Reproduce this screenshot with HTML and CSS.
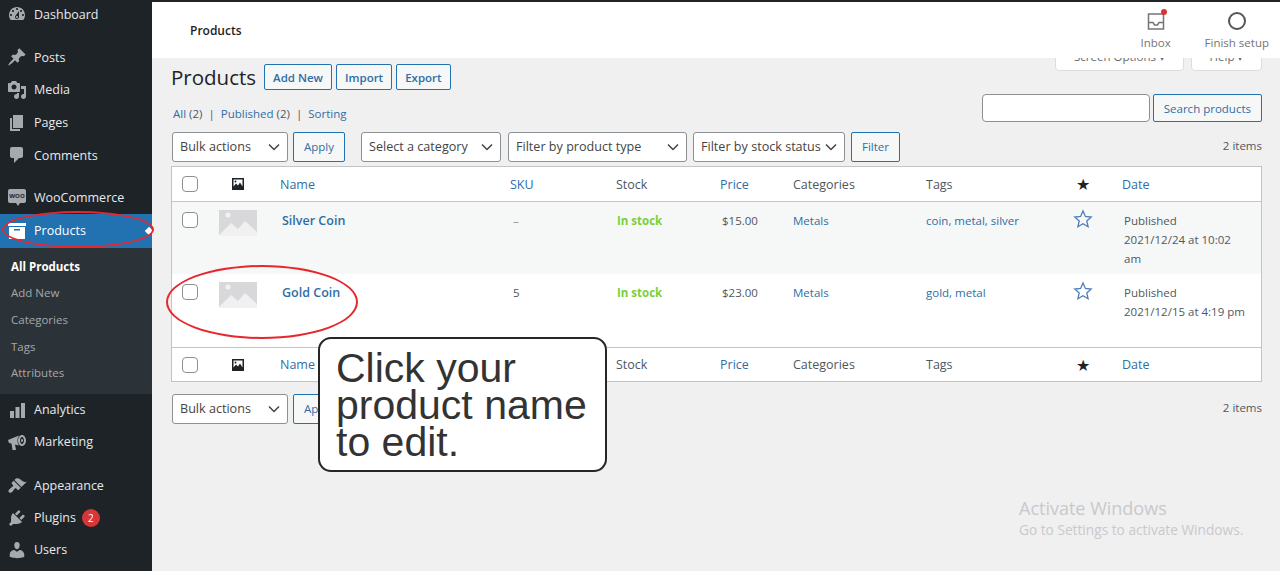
FILE: index.html
```html
<!DOCTYPE html>
<html>
<head>
    <meta charset="utf-8">
    <title>Products</title>
    <link rel="stylesheet" href="styles.css">
</head>
<body>
    <div class="page">
        <div class="sidebar">
            <a class="menu-item first"><svg viewBox="0 0 20 20"><path d="M3.76 16h12.48c1.1-1.37 1.76-3.11 1.76-5 0-4.42-3.58-8-8-8s-8 3.58-8 8c0 1.89.66 3.63 1.76 5zM10 4c.55 0 1 .45 1 1s-.45 1-1 1-1-.45-1-1 .45-1 1-1zM6 6c.55 0 1 .45 1 1s-.45 1-1 1-1-.45-1-1 .45-1 1-1zm8 0c.55 0 1 .45 1 1s-.45 1-1 1-1-.45-1-1 .45-1 1-1zm-5.37 5.55L12 7v6c0 1.1-.9 2-2 2s-2-.9-2-2c0-.57.24-1.08.63-1.45zM4 10c.55 0 1 .45 1 1s-.45 1-1 1-1-.45-1-1 .45-1 1-1zm12 0c.55 0 1 .45 1 1s-.45 1-1 1-1-.45-1-1 .45-1 1-1zm-5 3c0-.55-.45-1-1-1s-1 .45-1 1 .45 1 1 1 1-.45 1-1z"/></svg>Dashboard</a>
            <div class="menu-sep"></div>
            <a class="menu-item"><svg viewBox="0 0 20 20"><path d="M10.44 3.02l1.82-1.82 6.36 6.35-1.83 1.82c-1.05-.68-2.48-.57-3.41.36l-.75.75c-.92.93-1.04 2.35-.35 3.41l-1.83 1.82-2.41-2.41-2.8 2.79c-.42.42-3.38 2.71-3.8 2.29s1.86-3.39 2.28-3.81l2.79-2.79L4.1 9.36l1.83-1.82c1.05.69 2.48.57 3.4-.36l.75-.75c.93-.92 1.05-2.35.36-3.41z"/></svg>Posts</a>
            <a class="menu-item"><svg viewBox="0 0 20 20"><path d="M13 11V4c0-.55-.45-1-1-1h-1.67L9 1H5L3.67 3H2c-.55 0-1 .45-1 1v7c0 .55.45 1 1 1h10c.55 0 1-.45 1-1zM7 4.5c1.38 0 2.5 1.12 2.5 2.5S8.38 9.5 7 9.5 4.5 8.38 4.5 7 5.62 4.5 7 4.5zM14 6h5v10.5c0 1.38-1.12 2.5-2.5 2.5S14 17.88 14 16.5s1.12-2.5 2.5-2.5c.17 0 .34.02.5.05V9h-3V6zm-4 8.05V13h2v3.5c0 1.38-1.12 2.5-2.5 2.5S7 17.88 7 16.5 8.12 14 9.5 14c.17 0 .34.02.5.05z"/></svg>Media</a>
            <a class="menu-item"><svg viewBox="0 0 20 20"><path d="M6 15V2h10v13H6zm-1 1h8v2H3V5h2v11z"/></svg>Pages</a>
            <a class="menu-item"><svg viewBox="0 0 20 20"><path d="M5 2h9c1.1 0 2 .9 2 2v7c0 1.1-.9 2-2 2h-2l-5 5v-5H5c-1.1 0-2-.9-2-2V4c0-1.1.9-2 2-2z"/></svg>Comments</a>
            <div class="menu-sep short"></div>
            <a class="menu-item"><span class="woo-icon">WOO</span>WooCommerce</a>
            <a class="menu-item current"><svg viewBox="0 0 20 20"><path d="M19 5H1V2h18zM2 6h16v12H2zm5 2v1.500h6V8z" fill-rule="evenodd"/></svg>Products<span class="menu-arrow"></span></a>
            <div class="submenu">
                <a class="strong">All Products</a>
                <a>Add New</a>
                <a>Categories</a>
                <a>Tags</a>
                <a>Attributes</a>
            </div>
            <a class="menu-item tight"><svg viewBox="0 0 20 20"><path d="M3 11h4v7H3zM8.500 7h4v11h-4zM14 3h4v15h-4z"/></svg>Analytics</a>
            <a class="menu-item tight"><svg viewBox="0 0 20 20"><path d="M1 8l11-4.500c-1 1.500-1.500 3-1.500 5s.5 3.500 1.500 5L8 12.500 9 18H5.500L4.500 11.500 2 11zM15 3c2.200 0 4 2.500 4 5.500S17.200 14 15 14s-4-2.500-4-5.500S12.800 3 15 3zm0 2c-1.100 0-2 1.600-2 3.500s.9 3.500 2 3.500 2-1.600 2-3.500S16.100 5 15 5zm0 2c.6 0 1 .7 1 1.500s-.4 1.500-1 1.500-1-.7-1-1.500.4-1.500 1-1.500z" fill-rule="evenodd"/></svg>Marketing</a>
            <div class="menu-sep long"></div>
            <a class="menu-item tight"><svg viewBox="0 0 20 20"><path d="M14.480 11.060L7.410 3.990l1.500-1.500c.5-.56 2.300-.47 3.510.32 1.210.8 1.430 1.280 2.910 2.100 1.180.64 2.450 1.260 4.450.85zm-.71.71L6.700 4.700 4.930 6.470c-.39.39-.39 1.020 0 1.410l1.060 1.060c.39.39.39 1.030 0 1.420-.6.6-1.430 1.110-2.210 1.690-.35.26-.7.53-1.010.84C1.430 13.710.96 15.180 2 16.200c1.030 1.040 2.500.57 3.330-.36.31-.31.58-.66.84-1.010.58-.78 1.090-1.610 1.690-2.210.39-.39 1.030-.39 1.420 0l1.060 1.060c.39.39 1.020.39 1.410 0z"/></svg>Appearance</a>
            <a class="menu-item tight"><svg viewBox="0 0 20 20"><path d="M13.110 4.360L9.870 7.600 8 5.730l3.240-3.240c.35-.34 1.050-.2 1.560.32.52.51.66 1.210.31 1.550zm-8 1.770l.91-1.120 9.010 9.010-1.190.84c-.71.71-2.630 1.160-3.820 1.160H6.140L4.900 17.260c-.59.59-1.540.59-2.120 0-.59-.58-.59-1.530 0-2.120l1.240-1.240v-3.880c0-1.130.4-3.190 1.090-3.890zm7.260 3.970l3.240-3.240c.34-.35 1.040-.21 1.550.31.52.51.66 1.210.32 1.550l-3.240 3.250z"/></svg>Plugins<span class="badge">2</span></a>
            <a class="menu-item tight"><svg viewBox="0 0 20 20"><path d="M10 9.250c-2.270 0-2.730-3.440-2.730-3.440C7 4.020 7.820 2 9.970 2c2.160 0 2.980 2.020 2.710 3.810 0 0-.41 3.440-2.680 3.440zm0 2.570L12.720 10c2.390 0 4.520 2.330 4.520 4.530v2.490s-3.650 1.130-7.240 1.130c-3.650 0-7.240-1.130-7.240-1.130v-2.490c0-2.250 1.940-4.480 4.470-4.480z"/></svg>Users</a>
        </div>

        <div class="main">
            <div class="topbar">
                <div class="topbar-title">Products</div>
                <div class="top-action inbox">
                    <svg viewBox="0 0 20 20"><path d="M2.500 3h15v15h-15zM2.500 11.500h4.500l1.500 2.500h3l1.500-2.500h4.500" fill="none" stroke="#757575" stroke-width="1.500"/></svg>
                    <span class="inbox-dot"></span>
                    Inbox
                </div>
                <div class="top-action">
                    <svg viewBox="0 0 20 20"><circle cx="10" cy="10" r="8" fill="none" stroke="#555" stroke-width="2"/></svg>
                    Finish setup
                </div>
            </div>

            <div class="screen-tabs">
                <div class="screen-tab wide">Screen Options ▾</div>
                <div class="screen-tab">Help ▾</div>
            </div>

            <div class="content">
                <div class="title-row">
                    <h1>Products</h1>
                    <a class="btn">Add New</a>
                    <a class="btn">Import</a>
                    <a class="btn">Export</a>
                </div>

                <div class="views-row">
                    <div class="views"><a>All</a> (2)<span class="sep">|</span><a>Published</a> (2)<span class="sep">|</span><a>Sorting</a></div>
                    <div class="search">
                        <input type="text" class="search-input">
                        <a class="btn tall">Search products</a>
                    </div>
                </div>

                <div class="tablenav">
                    <select class="sel w-bulk"><option>Bulk actions</option></select>
                    <a class="btn tall apply">Apply</a>
                    <select class="sel w-cat"><option>Select a category</option></select>
                    <select class="sel w-type"><option>Filter by product type</option></select>
                    <select class="sel w-stock"><option>Filter by stock status</option></select>
                    <a class="btn tall filter">Filter</a>
                    <span class="count">2 items</span>
                </div>

                <table class="products">
                    <colgroup>
                        <col class="c-cb"><col class="c-thumb"><col class="c-name"><col class="c-sku"><col class="c-stock"><col class="c-price"><col class="c-cat"><col class="c-tags"><col class="c-star"><col>
                    </colgroup>
                    <thead>
                        <tr>
                            <th><span class="cb"></span></th>
                            <th><svg class="img-icon" viewBox="0 0 12 12"><path d="M0 0h12v12H0zM1.500 1.500v7l2.500-3 2 2 2-3 2.500 4v-7zM3.500 2.500a1 1 0 1 1 0 2 1 1 0 0 1 0-2z" fill-rule="evenodd"/></svg></th>
                            <th><a>Name</a></th>
                            <th><a>SKU</a></th>
                            <th>Stock</th>
                            <th><a>Price</a></th>
                            <th>Categories</th>
                            <th>Tags</th>
                            <th class="star-head">★</th>
                            <th><a>Date</a></th>
                        </tr>
                    </thead>
                    <tbody>
                        <tr class="alt">
                            <td><span class="cb"></span></td>
                            <td><svg class="thumb" viewBox="0 0 38 26"><rect width="38" height="26" fill="#d8d8da"/><circle cx="9" cy="5" r="2.500" fill="#f2f2f3"/><path d="M0 25l12-12 7 6 7-8 12 11v6H0z" fill="#f0f0f1"/></svg></td>
                            <td><a class="pname">Silver Coin</a></td>
                            <td class="sku muted">–</td>
                            <td class="instock">In stock</td>
                            <td class="price">$15.00</td>
                            <td><a>Metals</a></td>
                            <td><a>coin, metal, silver</a></td>
                            <td><svg class="star" viewBox="0 0 20 20"><path d="M10 2l2.400 5.500 5.800.6-4.400 3.900 1.300 5.800L10 14.800l-5.100 3 1.300-5.800L1.800 8.100l5.800-.6z"/></svg></td>
                            <td class="date">Published<br>2021/12/24 at 10:02 am</td>
                        </tr>
                        <tr class="second">
                            <td><span class="cb"></span></td>
                            <td><svg class="thumb" viewBox="0 0 38 26"><rect width="38" height="26" fill="#d8d8da"/><circle cx="9" cy="5" r="2.500" fill="#f2f2f3"/><path d="M0 25l12-12 7 6 7-8 12 11v6H0z" fill="#f0f0f1"/></svg></td>
                            <td><a class="pname">Gold Coin</a></td>
                            <td class="sku">5</td>
                            <td class="instock">In stock</td>
                            <td class="price">$23.00</td>
                            <td><a>Metals</a></td>
                            <td><a>gold, metal</a></td>
                            <td><svg class="star" viewBox="0 0 20 20"><path d="M10 2l2.400 5.500 5.800.6-4.400 3.900 1.300 5.800L10 14.800l-5.100 3 1.300-5.800L1.800 8.100l5.800-.6z"/></svg></td>
                            <td class="date">Published<br>2021/12/15 at 4:19 pm</td>
                        </tr>
                    </tbody>
                    <tfoot>
                        <tr>
                            <th><span class="cb"></span></th>
                            <th><svg class="img-icon" viewBox="0 0 12 12"><path d="M0 0h12v12H0zM1.500 1.500v7l2.500-3 2 2 2-3 2.500 4v-7zM3.500 2.500a1 1 0 1 1 0 2 1 1 0 0 1 0-2z" fill-rule="evenodd"/></svg></th>
                            <th><a>Name</a></th>
                            <th></th>
                            <th>Stock</th>
                            <th><a>Price</a></th>
                            <th>Categories</th>
                            <th>Tags</th>
                            <th class="star-head">★</th>
                            <th><a>Date</a></th>
                        </tr>
                    </tfoot>
                </table>

                <div class="tablenav bottom">
                    <select class="sel w-bulk"><option>Bulk actions</option></select>
                    <a class="btn tall apply">Apply</a>
                    <span class="count">2 items</span>
                </div>
            </div>
        </div>

        <!-- tutorial annotations on top of the screenshot -->
        <div class="ring ring-menu"></div>
        <div class="ring ring-row"></div>
        <div class="callout">Click your product name to edit.</div>
        <div class="watermark">
            <div class="wm-big">Activate Windows</div>
            <div>Go to Settings to activate Windows.</div>
        </div>
    </div>
</body>
</html>
```

FILE: styles.css
```css
* {
    box-sizing: border-box;
}
html, body {
    margin: 0;
    height: 571px;
    overflow: hidden;
}
body {
    font-family: "Open Sans", "Noto Sans", sans-serif;
    font-size: 12px;
    color: #50575e;
    background-color: #f0f0f1;
}
a {
    color: #2f6ea5;
    text-decoration: none;
}
.page {
    position: relative;
    display: flex;
    height: 571px;
    overflow: hidden;
}

/* Sidebar */
.sidebar {
    width: 152px;
    flex-shrink: 0;
    background-color: #1d2327;
    overflow: hidden;
}
.menu-item {
    position: relative;
    display: flex;
    align-items: center;
    height: 32.6px;
    padding-left: 7px;
    color: #e8e9ea;
    font-size: 12.5px;
}
.menu-item.first {
    margin-top: -2px;
}
.menu-item.tight {
    height: 32px;
}
.menu-item svg {
    width: 20px;
    height: 20px;
    margin-right: 7px;
    fill: #a7aaad;
    flex-shrink: 0;
}
.menu-sep {
    height: 10.5px;
}
.menu-sep.short {
    height: 9.5px;
}
.menu-sep.long {
    height: 12px;
}
.woo-icon {
    position: relative;
    width: 18px;
    height: 14px;
    margin: 0 8px 2px 1px;
    border-radius: 2px;
    background-color: #a7aaad;
    color: #1d2327;
    font-size: 6px;
    font-weight: 700;
    line-height: 14px;
    text-align: center;
}
.woo-icon::after {
    content: "";
    position: absolute;
    left: 8px;
    bottom: -3px;
    border-top: 3px solid #a7aaad;
    border-left: 2px solid transparent;
    border-right: 2px solid transparent;
}
.menu-item.current {
    height: 34px;
    background-color: #2271b1;
    color: #fff;
}
.menu-item.current svg {
    fill: #fff;
}
.menu-arrow {
    position: absolute;
    right: 0;
    top: 14px;
    width: 6px;
    height: 6px;
    background-color: #fff;
    transform: rotate(45deg);
}
.submenu {
    display: flex;
    flex-direction: column;
    height: 146.3px;
    padding: 6px 0 0 11px;
    background-color: #2c3338;
}
.submenu a {
    height: 26.7px;
    line-height: 26.7px;
    color: #a3a8ad;
    font-size: 11.5px;
}
.submenu a.strong {
    color: #fff;
    font-weight: 700;
}
.badge {
    width: 18px;
    height: 18px;
    margin-left: 6px;
    border-radius: 50%;
    background-color: #d63638;
    color: #fff;
    font-size: 10px;
    line-height: 18px;
    text-align: center;
}

/* Main column */
.main {
    flex: 1;
    min-width: 0;
}
.topbar {
    position: relative;
    z-index: 1;
    display: flex;
    align-items: center;
    height: 58px;
    padding-right: 11px;
    border-top: 2px solid #1d2327;
    background-color: #fff;
}
.topbar-title {
    flex: 1;
    padding-left: 38px;
    color: #1e1e1e;
    font-size: 12px;
    font-weight: 600;
}
.top-action {
    position: relative;
    display: flex;
    flex-direction: column;
    align-items: center;
    color: #757575;
    font-size: 11.5px;
    white-space: nowrap;
}
.top-action svg {
    width: 20px;
    height: 20px;
    margin-bottom: 4px;
}
.top-action.inbox {
    width: 32px;
    margin-right: 33px;
}
.inbox-dot {
    position: absolute;
    top: -2px;
    left: 21px;
    width: 6px;
    height: 6px;
    border-radius: 50%;
    background-color: #d63638;
}
.screen-tabs {
    display: flex;
    justify-content: flex-end;
    align-items: flex-end;
    gap: 7px;
    height: 13px;
    padding-right: 18px;
    overflow: hidden;
}
.screen-tab {
    flex-shrink: 0;
    width: 71px;
    height: 24px;
    border: 1px solid #dcdcde;
    border-radius: 0 0 4px 4px;
    background-color: #fff;
    color: #646970;
    font-size: 11.5px;
    line-height: 18px;
    text-align: center;
    white-space: nowrap;
}
.screen-tab.wide {
    width: 129px;
}
.content {
    padding: 0 18px 0 19px;
}
.title-row {
    display: flex;
    align-items: center;
    gap: 4px;
    height: 26px;
    margin-top: -7px;
}
h1 {
    margin: 0 4px 0 0;
    color: #1d2327;
    font-size: 20.5px;
    font-weight: 400;
    line-height: 26px;
}
.btn {
    display: inline-flex;
    align-items: center;
    height: 26px;
    padding: 0 8px;
    border: 1px solid #2271b1;
    border-radius: 2px;
    background-color: #f6f7f7;
    color: #2f6ea5;
    font-size: 11.5px;
    font-weight: 600;
    white-space: nowrap;
}
.btn.tall {
    height: 30px;
    padding: 0 10px;
    font-weight: 400;
}
.views-row {
    display: flex;
    justify-content: space-between;
    height: 41px;
    padding-top: 4px;
}
.views {
    padding: 12px 0 0 2px;
    font-size: 11.5px;
    line-height: 16px;
}
.views .sep {
    margin: 0 6px;
}
.search {
    display: flex;
    gap: 3px;
}
.search-input {
    width: 168px;
    height: 28px;
    border: 1px solid #8c8f94;
    border-radius: 4px;
    background-color: #fff;
}
.search .btn {
    height: 28px;
}
.tablenav {
    display: flex;
    align-items: center;
    height: 31px;
    padding-left: 1px;
}
.tablenav .count {
    margin-left: auto;
    padding-bottom: 3px;
    color: #50575e;
    font-size: 11.5px;
}
.sel {
    height: 30px;
    padding: 0 20px 0 7px;
    border: 1px solid #8c8f94;
    border-radius: 3px;
    background: #fff url("data:image/svg+xml,%3Csvg xmlns='http://www.w3.org/2000/svg' width='12' height='8'%3E%3Cpath d='M1 1.500l5 5 5-5' fill='none' stroke='%23444' stroke-width='1.500'/%3E%3C/svg%3E") no-repeat right 7px center;
    color: #444;
    font-family: inherit;
    font-size: 12.6px;
    appearance: none;
    -webkit-appearance: none;
}
.w-bulk { width: 116px; }
.w-cat { width: 140px; margin-right: 7px; }
.w-type { width: 179px; margin-right: 6px; }
.w-stock { width: 152px; margin-right: 6px; }
.apply {
    margin: 0 16px 0 5px;
}

/* Products table */
.products {
    width: 100%;
    margin-top: 4px;
    border: 1px solid #c3c4c7;
    border-collapse: separate;
    border-spacing: 0;
    background-color: #fff;
    table-layout: fixed;
    font-size: 11.5px;
}
.c-cb { width: 38px; }
.c-thumb { width: 62px; }
.c-name { width: 230px; }
.c-sku { width: 106px; }
.c-stock { width: 104px; }
.c-price { width: 73px; }
.c-cat { width: 133px; }
.c-tags { width: 150px; }
.c-star { width: 46px; }
.products th {
    height: 35px;
    padding: 0 8px;
    color: #50575e;
    font-size: 12.5px;
    font-weight: 400;
    text-align: left;
}
.products thead th {
    border-bottom: 1px solid #c3c4c7;
}
.products tfoot th {
    border-top: 1px solid #c3c4c7;
    height: 34px;
}
.products td {
    padding: 9px 8px 0;
    line-height: 19px;
    vertical-align: top;
}
.products th:first-child, .products td:first-child {
    padding-left: 10px;
    padding-right: 0;
}
.products td:first-child {
    padding-top: 10px;
}
.products tr.alt td {
    height: 72px;
    background-color: #f6f7f7;
}
.products tr.second td {
    height: 73px;
}
.products td:nth-child(2) {
    padding: 8px 0 0 9px;
}
.products th:nth-child(2) {
    padding-left: 22px;
}
.products td.sku {
    padding-left: 11px;
}
.products td.price {
    padding-left: 10px;
}
.products td.instock {
    padding-left: 9px;
    color: #7ad03a;
    font-weight: 700;
}
.products td.date {
    padding: 9px 12px 0 10px;
}
.cb {
    display: block;
    width: 16px;
    height: 16px;
    border: 1px solid #8c8f94;
    border-radius: 4px;
    background-color: #fff;
}
.img-icon {
    display: block;
    width: 12px;
    height: 12px;
    fill: #1d2327;
}
.thumb {
    display: block;
    width: 38px;
    height: 26px;
}
.pname {
    margin-left: 2px;
    font-size: 12.5px;
    font-weight: 600;
}
.muted {
    color: #8c8f94;
}
.products th.star-head {
    color: #1d2327;
    font-size: 16px;
}
.star {
    display: block;
    width: 20px;
    height: 20px;
    margin: -2px 0 0 -3px;
    fill: none;
    stroke: #4f7fb8;
    stroke-width: 1.3;
}
.tablenav.bottom {
    margin-top: 11px;
}

/* Annotations */
.ring {
    position: absolute;
    z-index: 2;
    border: 2px solid #e8262d;
    border-radius: 50%;
}
.ring-menu {
    left: 2px;
    top: 211px;
    width: 152px;
    height: 37px;
}
.ring-row {
    left: 166px;
    top: 265px;
    width: 192px;
    height: 74px;
}
.callout {
    position: absolute;
    z-index: 3;
    left: 318px;
    top: 337px;
    width: 289px;
    height: 135px;
    padding: 11px 10px 0 16px;
    border: 2px solid #262626;
    border-radius: 13px;
    background-color: #fff;
    color: #333;
    font-family: "Liberation Sans", Arial, sans-serif;
    font-size: 41px;
    line-height: 37px;
}
.watermark {
    position: absolute;
    left: 1019px;
    top: 496px;
    color: #c8c9cc;
    font-size: 13.7px;
    line-height: 20px;
}
.wm-big {
    font-size: 18px;
    line-height: 24px;
}
```
